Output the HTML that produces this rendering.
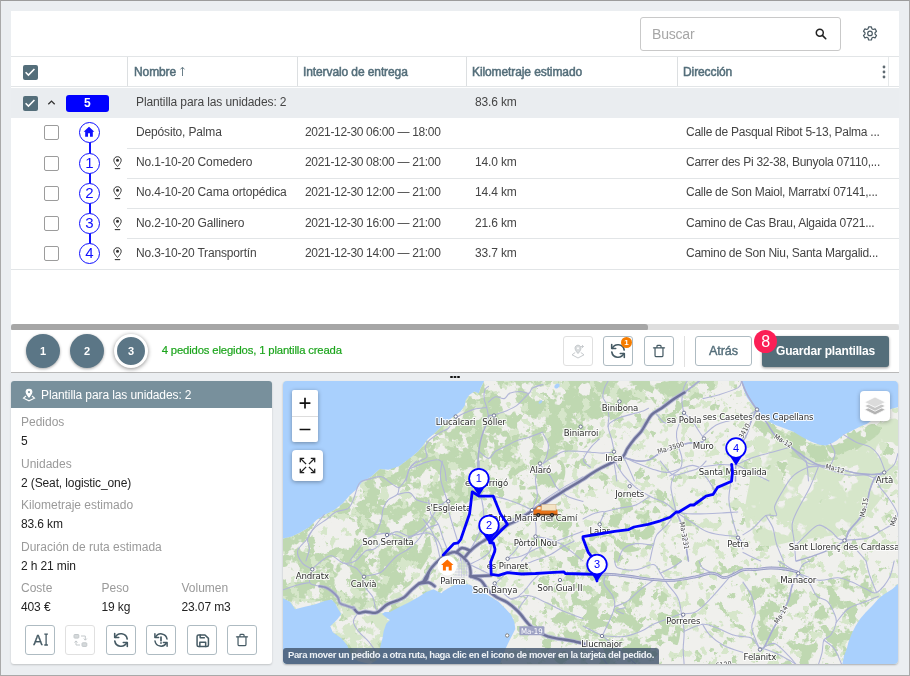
<!DOCTYPE html>
<html lang="es">
<head>
<meta charset="utf-8">
<title>Plantillas</title>
<style>
*{box-sizing:border-box;margin:0;padding:0}
html,body{width:910px;height:676px;overflow:hidden}
body{font-family:"Liberation Sans",sans-serif;font-size:12px;color:#3c3c3c;background:#ebeef1;position:relative}
#wrap{position:absolute;left:0;top:0;width:910px;height:676px;will-change:transform}
.frame{position:absolute;left:0;top:0;width:910px;height:676px;border:1px solid #a9a9a9;border-top-color:#9c9c9c;pointer-events:none;z-index:50}
.abs{position:absolute}
.panel{position:absolute;left:11px;top:11px;width:888px;height:313px;background:#fff}
.search{position:absolute;left:640px;top:17px;width:201px;height:34px;border:1px solid #c9c9c9;border-radius:3px;background:#fff}
.search span{position:absolute;left:11px;top:8px;font-size:14px;color:#a6a6a6;letter-spacing:-0.2px}
.hline{position:absolute;height:1px;background:#e2e5e7}
.vline{position:absolute;width:1px;background:#dcdfe1}
.th{position:absolute;top:64.5px;font-weight:normal;font-size:12px;color:#546e7a;-webkit-text-stroke:0.5px #546e7a;letter-spacing:-0.1px;white-space:nowrap}
.grow{position:absolute;left:11px;top:87.5px;width:888px;height:30.2px;background:#eaedf0}
.td{position:absolute;white-space:nowrap;font-size:12px;letter-spacing:-0.16px;color:#454545}
.cb{position:absolute;width:15px;height:15px;border:1.7px solid #9c9c9c;border-radius:2px;background:#fff}
.cbx{position:absolute;width:15px;height:15px;border-radius:2px;background:#546e7a}
.seq{position:absolute;left:79px;width:21px;height:21px;border:1.6px solid #1010ff;border-radius:50%;background:#fff;color:#1010ff;font-size:15px;text-align:center;line-height:18px}
.btn{position:absolute;width:30px;height:30px;border:1px solid #aebbc2;border-radius:3px;background:#fff}
.btn.dis{border-color:#e0e0e0}
.lab{position:absolute;left:21px;font-size:12px;color:#9a9a9a;letter-spacing:0;white-space:nowrap}
.val{position:absolute;left:21px;font-size:12px;color:#222;letter-spacing:-0.12px;margin-top:0.5px;white-space:nowrap}
</style>
</head>
<body>
<div id="wrap">
<div class="panel"></div>

<!-- search -->
<div class="search"><span>Buscar</span>
<svg class="abs" style="left:173px;top:9px" width="14" height="14" viewBox="0 0 16 16"><circle cx="6.600" cy="6.600" r="4" fill="none" stroke="#222" stroke-width="1.700"/><path d="M9.600 9.600L13.400 13.400" stroke="#222" stroke-width="1.900" stroke-linecap="round"/></svg>
</div>
<svg class="abs" style="left:861px;top:25px" width="18" height="18" viewBox="0 0 18 18" fill="none" stroke="#4a5a63" stroke-width="1.2"><path d="M7.6 1.8h2.8l.5 2 1.2.7 2-.6 1.4 2.4-1.5 1.4v1.4l1.5 1.4-1.4 2.4-2-.6-1.2.7-.5 2H7.6l-.5-2-1.2-.7-2 .6-1.4-2.4L4 9.1V7.7L2.500 6.300l1.400-2.400 2 .6 1.200-.7z" stroke-linejoin="round"/><circle cx="9" cy="8.400" r="2.300"/></svg>

<!-- header -->
<div class="hline" style="left:11px;top:56px;width:888px"></div>
<div class="hline" style="left:11px;top:86px;width:888px"></div>
<div class="vline" style="left:127px;top:57px;height:29px"></div>
<div class="vline" style="left:297px;top:57px;height:29px"></div>
<div class="vline" style="left:466px;top:57px;height:29px"></div>
<div class="vline" style="left:677px;top:57px;height:29px"></div>
<div class="vline" style="left:888px;top:57px;height:29px;background:#e6e9ea"></div>
<div class="cbx" style="left:22.5px;top:64.5px"><svg class="abs" style="left:0;top:0" width="15" height="15" viewBox="0.5 0.5 16 16"><path d="M3.3 8.200l3 3L12.700 4.800" fill="none" stroke="#fff" stroke-width="1.7"/></svg></div>
<div class="th" style="left:134px">Nombre<svg class="abs" style="left:45px;top:1px" width="7" height="11" viewBox="0 0 7 11" fill="none" stroke="#6b7f89" stroke-width="1"><path d="M3.500 10V1.200M1.500 3.400l2-2.200 2 2.200"/></svg></div>
<div class="th" style="left:303px">Intervalo de entrega</div>
<div class="th" style="left:472px">Kilometraje estimado</div>
<div class="th" style="left:683px">Dirección</div>
<svg class="abs" style="left:881px;top:64px" width="6" height="16" viewBox="0 0 6 16" fill="#5f6b72"><circle cx="3" cy="3" r="1.4"/><circle cx="3" cy="8" r="1.4"/><circle cx="3" cy="13" r="1.4"/></svg>

<!-- group row -->
<div class="grow"></div>
<div class="cbx" style="left:22.5px;top:95.5px"><svg class="abs" style="left:0;top:0" width="15" height="15" viewBox="0.5 0.5 16 16"><path d="M3.3 8.200l3 3L12.700 4.800" fill="none" stroke="#fff" stroke-width="1.7"/></svg></div>
<svg class="abs" style="left:47px;top:99px" width="9" height="7" viewBox="0 0 9 7"><path d="M1.300 5.300L4.500 2.100l3.200 3.200" fill="none" stroke="#333" stroke-width="1.3"/></svg>
<div class="abs" style="left:66px;top:95px;width:42.5px;height:16.5px;border-radius:3px;background:#0000ff;color:#fff;font-weight:bold;font-size:12px;text-align:center;line-height:16.5px">5</div>
<div class="td" style="left:136px;top:94.9px;letter-spacing:-0.1px">Plantilla para las unidades: 2</div>
<div class="td" style="left:475px;top:94.9px">83.6 km</div>

<!-- rows -->
<div class="abs" style="left:88.5px;top:133px;width:2px;height:121px;background:#1010ff"></div>
<div class="hline" style="left:127px;top:148px;width:772px"></div>
<div class="cb" style="left:44px;top:125.4px"></div>
<div class="seq" style="top:122.4px"><svg class="abs" style="left:2.9px;top:2.6px" width="12" height="12" viewBox="0 0 11 11"><path d="M5.500 0.800L0.600 5.300h1.400v4.500h2.600V6.700h1.800v3.100h2.600V5.300h1.400z" fill="#1010ff"/></svg></div>
<div class="td" style="left:136px;top:125px">Depósito, Palma</div>
<div class="td" style="left:305px;top:125px;letter-spacing:-0.33px">2021-12-30 06:00 — 18:00</div>
<div class="td" style="left:686px;top:125px;letter-spacing:-0.26px">Calle de Pasqual Ribot 5-13, Palma ...</div>
<div class="hline" style="left:127px;top:178px;width:772px"></div>
<div class="cb" style="left:44px;top:155.6px"></div>
<div class="seq" style="top:152.6px">1</div>
<svg class="abs" style="left:113px;top:156.1px" width="9" height="14" viewBox="0 0 9 14"><path d="M4.500 0.700C2.400 0.700 0.800 2.300 0.800 4.300c0 2.500 3.700 6.200 3.700 6.200s3.700-3.700 3.700-6.200C8.200 2.300 6.600 0.700 4.500 0.700z" fill="#fff" stroke="#333" stroke-width="1"/><circle cx="4.500" cy="4.300" r="1.500" fill="#333"/><path d="M1.800 12.600h5.400" stroke="#333" stroke-width="1.100"/></svg>
<div class="td" style="left:136px;top:155px">No.1-10-20 Comedero</div>
<div class="td" style="left:305px;top:155px;letter-spacing:-0.33px">2021-12-30 08:00 — 21:00</div>
<div class="td" style="left:475px;top:155px">14.0 km</div>
<div class="td" style="left:686px;top:155px;letter-spacing:-0.26px">Carrer des Pi 32-38, Bunyola 07110,...</div>
<div class="hline" style="left:127px;top:208px;width:772px"></div>
<div class="cb" style="left:44px;top:185.8px"></div>
<div class="seq" style="top:182.8px">2</div>
<svg class="abs" style="left:113px;top:186.3px" width="9" height="14" viewBox="0 0 9 14"><path d="M4.500 0.700C2.400 0.700 0.800 2.300 0.800 4.300c0 2.500 3.700 6.200 3.700 6.200s3.700-3.700 3.700-6.200C8.200 2.300 6.600 0.700 4.500 0.700z" fill="#fff" stroke="#333" stroke-width="1"/><circle cx="4.500" cy="4.300" r="1.500" fill="#333"/><path d="M1.800 12.600h5.400" stroke="#333" stroke-width="1.100"/></svg>
<div class="td" style="left:136px;top:185.4px">No.4-10-20 Cama ortopédica</div>
<div class="td" style="left:305px;top:185.4px;letter-spacing:-0.33px">2021-12-30 12:00 — 21:00</div>
<div class="td" style="left:475px;top:185.4px">14.4 km</div>
<div class="td" style="left:686px;top:185.4px;letter-spacing:-0.26px">Calle de Son Maiol, Marratxí 07141,...</div>
<div class="hline" style="left:127px;top:238px;width:772px"></div>
<div class="cb" style="left:44px;top:216.0px"></div>
<div class="seq" style="top:213.0px">3</div>
<svg class="abs" style="left:113px;top:216.5px" width="9" height="14" viewBox="0 0 9 14"><path d="M4.500 0.700C2.400 0.700 0.800 2.300 0.800 4.300c0 2.500 3.700 6.200 3.700 6.200s3.700-3.700 3.700-6.200C8.200 2.300 6.600 0.700 4.500 0.700z" fill="#fff" stroke="#333" stroke-width="1"/><circle cx="4.500" cy="4.300" r="1.500" fill="#333"/><path d="M1.800 12.600h5.400" stroke="#333" stroke-width="1.100"/></svg>
<div class="td" style="left:136px;top:215.6px">No.2-10-20 Gallinero</div>
<div class="td" style="left:305px;top:215.6px;letter-spacing:-0.33px">2021-12-30 16:00 — 21:00</div>
<div class="td" style="left:475px;top:215.6px">21.6 km</div>
<div class="td" style="left:686px;top:215.6px;letter-spacing:-0.26px">Camino de Cas Brau, Algaida 0721...</div>
<div class="hline" style="left:11px;top:269px;width:888px"></div>
<div class="cb" style="left:44px;top:246.2px"></div>
<div class="seq" style="top:243.2px">4</div>
<svg class="abs" style="left:113px;top:246.7px" width="9" height="14" viewBox="0 0 9 14"><path d="M4.500 0.700C2.400 0.700 0.800 2.300 0.800 4.300c0 2.500 3.700 6.200 3.700 6.200s3.700-3.700 3.700-6.200C8.200 2.300 6.600 0.700 4.500 0.700z" fill="#fff" stroke="#333" stroke-width="1"/><circle cx="4.500" cy="4.300" r="1.500" fill="#333"/><path d="M1.800 12.600h5.400" stroke="#333" stroke-width="1.100"/></svg>
<div class="td" style="left:136px;top:245.8px">No.3-10-20 Transportín</div>
<div class="td" style="left:305px;top:245.8px;letter-spacing:-0.33px">2021-12-30 14:00 — 21:00</div>
<div class="td" style="left:475px;top:245.8px">33.7 km</div>
<div class="td" style="left:686px;top:245.8px;letter-spacing:-0.26px">Camino de Son Niu, Santa Margalid...</div>


<div class="frame"></div>
<!-- scrollbar -->
<div class="abs" style="left:11px;top:324px;width:888px;height:6.5px;background:#dedede;border-radius:3px"></div>
<div class="abs" style="left:11px;top:324px;width:637px;height:6.5px;background:#a6a6a6;border-radius:3px"></div>

<!-- toolbar -->
<div class="abs" style="left:11px;top:330px;width:888px;height:42.5px;background:#fff;border-bottom:1.5px solid #b9b9b9"></div>
<div class="abs stp" style="left:26px;top:334px;width:34px;height:34px;border-radius:50%;background:#5b7686;box-shadow:0 1px 3px rgba(0,0,0,.35);color:#fff;font-weight:bold;font-size:11px;text-align:center;line-height:34px">1</div>
<div class="abs stp" style="left:70px;top:334px;width:34px;height:34px;border-radius:50%;background:#5b7686;box-shadow:0 1px 3px rgba(0,0,0,.35);color:#fff;font-weight:bold;font-size:11px;text-align:center;line-height:34px">2</div>
<div class="abs stp" style="left:114px;top:334px;width:34px;height:34px;border-radius:50%;background:#5b7686;border:3px solid #fff;box-shadow:0 1px 4px rgba(0,0,0,.45);color:#fff;font-weight:bold;font-size:11px;text-align:center;line-height:28px">3</div>
<div class="abs" style="left:161.7px;top:344px;font-size:11.3px;color:#1da51d;-webkit-text-stroke:0.2px #1da51d;letter-spacing:-0.15px;white-space:nowrap">4 pedidos elegidos, 1 plantilla creada</div>

<div class="btn dis" style="left:563px;top:336px"><svg class="abs" style="left:6px;top:6px" width="17" height="17" viewBox="0 0 17 17" fill="none" stroke="#c6cacd" stroke-width="1"><path d="M8 2.200c-1.700 0-3 1.300-3 3 0 2.100 3 5.300 3 5.300s3-3.200 3-5.300c0-1.700-1.300-3-3-3z" fill="#d9dcde"/><circle cx="8" cy="5.200" r="1" fill="#fff" stroke="none"/><path d="M5.200 9.500L2 11.800l6 3.200 6-3.200-3.200-2.300"/><path d="M12.500 2v3M11 3.500h3" stroke-width=".9"/></svg></div>
<div class="btn" style="left:603px;top:336px"><svg class="abs" style="left:6px;top:6px" width="16" height="16" viewBox="0 0 16 16" fill="none" stroke="#455a64" stroke-width="1.600" stroke-linecap="round" stroke-linejoin="round"><path d="M1.700 1.500V5.500H5.700"/><path d="M14.300 14.500V10.500H10.300"/><path d="M2.300 5.300A6.300 6.300 0 0 1 14.200 7"/><path d="M13.700 10.700A6.300 6.300 0 0 1 1.800 9"/></svg></div>
<div class="btn" style="left:644px;top:336px"><svg class="abs" style="left:7.0px;top:7.0px" width="14" height="14" viewBox="0 0 24 24" fill="none" stroke="#455a64" stroke-width="2.1" stroke-linecap="round" stroke-linejoin="round"><path d="M2.500 6.500h19"/><path d="M18.800 6.500v13a2.300 2.300 0 0 1-2.300 2.300h-9a2.300 2.300 0 0 1-2.300-2.300v-13"/><path d="M8.500 6V3.800a1.500 1.500 0 0 1 1.500-1.500h4a1.500 1.500 0 0 1 1.500 1.500V6"/></svg></div>
<div class="vline" style="left:684px;top:336px;height:31px;background:#e0e0e0"></div>
<div class="btn" style="left:695px;top:336px;width:57px;color:#546e7a;-webkit-text-stroke:0.4px #546e7a;font-size:12.6px;text-align:center;line-height:28px;letter-spacing:-0.1px">Atrás</div>
<div class="abs" style="left:762px;top:336px;width:127px;height:31px;border-radius:3px;background:#546e7a;box-shadow:0 1px 3px rgba(0,0,0,.4);color:#fff;font-weight:bold;font-size:12px;text-align:center;line-height:30px;letter-spacing:-0.17px;padding-left:0px">Guardar plantillas</div>
<div class="abs" style="left:754.2px;top:329.9px;width:23px;height:23px;border-radius:50%;background:#fb1f56;color:#fff;font-size:16px;text-align:center;line-height:23px">8</div>
<div class="abs" style="left:621px;top:336.500px;width:11px;height:11px;border-radius:50%;background:#f57c00;color:#fff;font-size:8px;font-weight:bold;text-align:center;line-height:11px">1</div>

<!-- splitter dots -->
<div class="abs" style="left:450.2px;top:375.6px;width:2.7px;height:2.7px;background:#111;border-radius:50%;box-shadow:3.5px 0 0 #111,7px 0 0 #111"></div>

<!-- card -->
<div class="abs" style="left:11px;top:381px;width:261px;height:283px;background:#fff;border-radius:3px;box-shadow:0 1px 2px rgba(0,0,0,.18)"></div>
<div class="abs" style="left:11px;top:381px;width:261px;height:27px;background:#78909c;border-radius:3px 3px 0 0"></div>
<svg class="abs" style="left:22px;top:388px" width="14" height="14" viewBox="0 0 14 14" fill="none" stroke="#fff" stroke-width="1.100"><path d="M7 1.200c-1.700 0-2.900 1.300-2.900 2.900 0 2 2.900 4.900 2.900 4.900s2.900-2.900 2.900-4.900c0-1.600-1.200-2.900-2.900-2.900z" fill="#fff"/><circle cx="7" cy="4.100" r="1.100" fill="#78909c" stroke="none"/><path d="M4 8L1.500 10.200 7 12.800l5.500-2.600L10 8"/></svg>
<div class="abs" style="left:41px;top:387.500px;font-size:12px;color:#fff;letter-spacing:-0.1px;white-space:nowrap">Plantilla para las unidades: 2</div>
<div class="lab" style="top:415px">Pedidos</div>
<div class="val" style="top:433.500px">5</div>
<div class="lab" style="top:456.500px">Unidades</div>
<div class="val" style="top:475px">2 (Seat, logistic_one)</div>
<div class="lab" style="top:497.500px">Kilometraje estimado</div>
<div class="val" style="top:516px">83.6 km</div>
<div class="lab" style="top:539.500px">Duración de ruta estimada</div>
<div class="val" style="top:558.500px">2 h 21 min</div>
<div class="lab" style="top:581px">Coste</div>
<div class="val" style="top:599.500px">403 €</div>
<div class="lab" style="top:581px;left:101.500px">Peso</div>
<div class="val" style="top:599.500px;left:101.500px">19 kg</div>
<div class="lab" style="top:581px;left:181.500px">Volumen</div>
<div class="val" style="top:599.500px;left:181.500px">23.07 m3</div>
<div class="btn" style="left:25px;top:625.3px"><svg class="abs" style="left:6px;top:6px" width="18" height="16" viewBox="0 0 18 16"><text x="1.300" y="12.900" font-family="'Liberation Sans',sans-serif" font-size="14" fill="#455a64" stroke="#455a64" stroke-width=".3">A</text><path d="M12.300 2.200h3.600M12.300 13h3.600M14.100 2.200V13" stroke="#455a64" stroke-width="1.300" fill="none"/></svg></div>
<div class="btn dis" style="left:65px;top:625.3px"><svg class="abs" style="left:7px;top:7px" width="15" height="15" viewBox="0 0 15 15" fill="none" stroke="#c3c8cb" stroke-width="1"><rect x="1" y="1.500" width="4.800" height="3.600" rx=".8" fill="#d5d9db"/><rect x="9" y="9.800" width="4.800" height="3.600" rx=".8" fill="#d5d9db"/><path d="M8 3h4.300v4M10.800 5.600l1.500 1.600 1.500-1.600M7 12H3V8M1.500 9.500L3 7.900l1.500 1.600"/></svg></div>
<div class="btn" style="left:106px;top:625.3px"><svg class="abs" style="left:6px;top:6px" width="16" height="16" viewBox="0 0 16 16" fill="none" stroke="#455a64" stroke-width="1.600" stroke-linecap="round" stroke-linejoin="round"><path d="M1.700 1.500V5.500H5.700"/><path d="M14.300 14.500V10.500H10.300"/><path d="M2.300 5.300A6.300 6.300 0 0 1 14.200 7"/><path d="M13.700 10.700A6.300 6.300 0 0 1 1.800 9"/></svg></div>
<div class="btn" style="left:146px;top:625.3px"><svg class="abs" style="left:6px;top:6px" width="16" height="16" viewBox="0 0 16 16" fill="none" stroke="#455a64" stroke-width="1.500" stroke-linecap="round" stroke-linejoin="round"><path d="M1.900 1.800V5.500H5.600"/><path d="M14.100 14.200V10.500H10.400"/><path d="M2.500 5.300A6.100 6.100 0 0 1 14 7"/><path d="M13.500 10.700A6.100 6.100 0 0 1 2 9"/><path d="M8 5v3.700M8 10.900v.2" stroke-width="1.700"/></svg></div>
<div class="btn" style="left:187px;top:625.3px"><svg class="abs" style="left:6.500px;top:6.500px" width="15.500" height="15.500" viewBox="0 0 24 24" fill="none" stroke="#455a64" stroke-width="2.300" stroke-linecap="round" stroke-linejoin="round"><path d="M18.500 21h-13a2.300 2.300 0 0 1-2.300-2.300V5.300A2.300 2.300 0 0 1 5.500 3H15.500l5.300 5.300v10.400a2.300 2.300 0 0 1-2.300 2.300z"/><path d="M16.500 21v-6.500h-9V21"/><path d="M8 3.200v4.300h6.500"/></svg></div>
<div class="btn" style="left:227px;top:625.3px"><svg class="abs" style="left:7.0px;top:7.0px" width="14" height="14" viewBox="0 0 24 24" fill="none" stroke="#455a64" stroke-width="2.1" stroke-linecap="round" stroke-linejoin="round"><path d="M2.500 6.500h19"/><path d="M18.800 6.500v13a2.300 2.300 0 0 1-2.300 2.300h-9a2.300 2.300 0 0 1-2.300-2.300v-13"/><path d="M8.500 6V3.800a1.500 1.500 0 0 1 1.500-1.500h4a1.500 1.500 0 0 1 1.500 1.500V6"/></svg></div>

<!-- map -->
<div id="map" class="abs" style="left:283px;top:381px;width:615px;height:283px;border-radius:4px;overflow:hidden;background:#f1f1ef;box-shadow:0 1px 2px rgba(0,0,0,.28)">
<svg class="abs" style="left:0;top:0" width="615" height="283" viewBox="283 381 615 283" font-family="'DejaVu Sans Condensed','DejaVu Sans',sans-serif" font-size="9.2">
<defs><filter id="rgh" x="-5%" y="-5%" width="110%" height="110%"><feTurbulence type="fractalNoise" baseFrequency="0.09" numOctaves="3" seed="4"/><feDisplacementMap in="SourceGraphic" scale="9" xChannelSelector="R" yChannelSelector="G"/></filter><filter id="rgh2" x="-5%" y="-5%" width="110%" height="110%"><feTurbulence type="fractalNoise" baseFrequency="0.16" numOctaves="2" seed="11"/><feDisplacementMap in="SourceGraphic" scale="6" xChannelSelector="R" yChannelSelector="G"/></filter></defs>
<rect x="283" y="381" width="615" height="283" fill="#f0f0ed"/>
<defs><filter id="fA" x="0" y="0" width="100%" height="100%" color-interpolation-filters="sRGB"><feTurbulence type="fractalNoise" baseFrequency="0.06" numOctaves="4" seed="3" result="n"/><feColorMatrix in="n" type="matrix" values="0 0 0 0 0.749 0 0 0 0 0.847 0 0 0 0 0.694 18 0 0 0 -7.65" result="t"/><feComposite in="t" in2="SourceGraphic" operator="in"/></filter><filter id="fB" x="0" y="0" width="100%" height="100%" color-interpolation-filters="sRGB"><feTurbulence type="fractalNoise" baseFrequency="0.07" numOctaves="4" seed="8" result="n"/><feColorMatrix in="n" type="matrix" values="0 0 0 0 0.839 0 0 0 0 0.902 0 0 0 0 0.792 18 0 0 0 -8.46" result="t"/><feComposite in="t" in2="SourceGraphic" operator="in"/></filter><filter id="fC" x="0" y="0" width="100%" height="100%" color-interpolation-filters="sRGB"><feTurbulence type="fractalNoise" baseFrequency="0.085" numOctaves="4" seed="21" result="n"/><feColorMatrix in="n" type="matrix" values="0 0 0 0 0.749 0 0 0 0 0.847 0 0 0 0 0.694 20 0 0 0 -12.64" result="t"/><feComposite in="t" in2="SourceGraphic" operator="in"/></filter><filter id="fD" x="0" y="0" width="100%" height="100%" color-interpolation-filters="sRGB"><feTurbulence type="fractalNoise" baseFrequency="0.1" numOctaves="4" seed="33" result="n"/><feColorMatrix in="n" type="matrix" values="0 0 0 0 0.839 0 0 0 0 0.902 0 0 0 0 0.792 20 0 0 0 -11.90" result="t"/><feComposite in="t" in2="SourceGraphic" operator="in"/></filter><filter id="fE" x="0" y="0" width="100%" height="100%" color-interpolation-filters="sRGB"><feTurbulence type="fractalNoise" baseFrequency="0.07" numOctaves="4" seed="5" result="n"/><feColorMatrix in="n" type="matrix" values="0 0 0 0 0.749 0 0 0 0 0.847 0 0 0 0 0.694 18 0 0 0 -9.54" result="t"/><feComposite in="t" in2="SourceGraphic" operator="in"/></filter><filter id="fF" x="0" y="0" width="100%" height="100%" color-interpolation-filters="sRGB"><feTurbulence type="fractalNoise" baseFrequency="0.05" numOctaves="3" seed="15" result="n"/><feColorMatrix in="n" type="matrix" values="0 0 0 0 0.839 0 0 0 0 0.902 0 0 0 0 0.792 18 0 0 0 -7.20" result="t"/><feComposite in="t" in2="SourceGraphic" operator="in"/></filter></defs>
<path d="M484.1 381.0 L480.6 388.0 L478.8 393.3 L474.4 391.5 L469.2 395.0 L465.6 400.3 L464.8 405.6 L460.4 411.8 L455.0 415.3 L450.7 418.8 L444.5 423.2 L439.3 428.5 L434.0 433.7 L427.8 439.0 L422.6 446.0 L418.2 451.3 L412.0 456.6 L406.0 461.0 L399.0 466.3 L388.5 469.8 L379.7 468.9 L371.0 476.8 L362.0 482.0 L356.8 489.0 L349.8 495.3 L342.8 503.2 L334.0 510.2 L325.2 514.6 L316.4 520.0 L309.4 527.0 L300.6 532.2 L291.8 536.6 L283.0 538.4 L283.0 600.0 L300.0 604.0 L320.0 601.0 L340.0 607.0 L355.0 612.0 L372.0 606.0 L392.0 598.0 L410.0 585.0 L422.0 568.0 L432.0 552.0 L430.0 537.0 L436.0 522.0 L446.0 508.0 L470.0 502.0 L492.0 496.0 L505.0 484.0 L520.0 472.0 L538.0 464.0 L560.0 456.0 L585.0 448.0 L600.0 438.0 L612.0 425.0 L625.0 410.0 L645.0 400.0 L668.0 398.0 L690.0 392.0 L700.0 381.0 Z" fill="#000" filter="url(#fA)"/>
<g filter="url(#rgh)">
<path d="M316.4 521.7 C319.6 521.0 329.6 518.0 335.7 517.6 C341.9 517.2 349.7 517.1 353.3 519.4 C357.0 521.7 357.7 527.3 357.7 531.3 C357.7 535.4 357.0 540.7 353.3 543.6 C349.7 546.6 342.2 547.3 335.7 548.9 C329.3 550.5 320.4 553.2 314.6 553.3 C308.9 553.5 302.6 552.9 301.5 549.8 C300.3 546.7 306.6 537.3 307.6 534.8 Z" fill="#f0f0ed"/>
<path d="M381.5 487.4 C383.8 486.8 392.6 482.4 395.5 483.9 C398.5 485.3 400.2 492.4 399.0 496.2 C397.9 500.0 392.0 505.8 388.5 506.7 C385.0 507.6 379.7 502.3 377.9 501.4 Z" fill="#f0f0ed"/>
</g>
<path d="M283.0 596.0 L340.0 603.0 L372.0 602.0 L392.0 594.0 L412.0 590.0 L425.0 575.0 L432.0 590.0 L420.0 600.0 L400.0 606.0 L388.0 612.0 L384.0 640.0 L380.0 664.0 L340.0 664.0 L330.0 640.0 L320.0 615.0 L283.0 615.0 Z" fill="#000" filter="url(#fB)"/>
<rect x="283" y="381" width="615" height="283" fill="#000" filter="url(#fC)"/>
<rect x="283" y="381" width="615" height="283" fill="#000" filter="url(#fD)"/>
<path d="M745.0 455.0 C752.5 452.5 775.8 441.5 790.0 440.0 C804.2 438.5 817.5 447.3 830.0 446.0 C842.5 444.7 853.7 436.3 865.0 432.0 C876.3 427.7 892.5 413.7 898.0 420.0 C903.5 426.3 901.0 456.7 898.0 470.0 C895.0 483.3 888.0 490.0 880.0 500.0 C872.0 510.0 863.3 523.3 850.0 530.0 C836.7 536.7 815.0 537.5 800.0 540.0 C785.0 542.5 769.2 548.3 760.0 545.0 C750.8 541.7 746.7 530.8 745.0 520.0 C743.3 509.2 749.2 486.7 750.0 480.0 Z" fill="#000" filter="url(#fF)"/>
<path d="M545.0 585.0 C554.2 584.2 580.8 579.2 600.0 580.0 C619.2 580.8 646.7 583.3 660.0 590.0 C673.3 596.7 678.3 609.2 680.0 620.0 C681.7 630.8 680.0 647.7 670.0 655.0 C660.0 662.3 638.3 662.5 620.0 664.0 C601.7 665.5 572.5 669.7 560.0 664.0 C547.5 658.3 547.5 635.7 545.0 630.0 Z" fill="#000" filter="url(#fE)"/>
<path d="M800.0 600.0 C808.3 595.8 835.8 577.5 850.0 575.0 C864.2 572.5 883.3 578.3 885.0 585.0 C886.7 591.7 866.7 601.8 860.0 615.0 C853.3 628.2 855.0 655.8 845.0 664.0 C835.0 672.2 809.2 669.7 800.0 664.0 C790.8 658.3 791.7 635.7 790.0 630.0 Z" fill="#000" filter="url(#fE)"/>
<path d="M610.0 495.0 C618.3 494.2 650.8 485.0 660.0 490.0 C669.2 495.0 668.3 515.0 665.0 525.0 C661.7 535.0 650.8 545.5 640.0 550.0 C629.2 554.5 606.7 551.7 600.0 552.0 Z" fill="#000" filter="url(#fE)"/>
<path d="M535.0 535.0 C543.3 535.8 575.8 531.7 585.0 540.0 C594.2 548.3 595.8 577.5 590.0 585.0 C584.2 592.5 556.7 585.0 550.0 585.0 Z" fill="#000" filter="url(#fE)"/>
<path d="M640.0 385.0 C652.5 384.3 701.7 378.5 715.0 381.0 C728.3 383.5 729.2 395.2 720.0 400.0 C710.8 404.8 670.0 408.3 660.0 410.0 Z" fill="#000" filter="url(#fE)"/>
<path d="M515.0 465.0 C522.5 464.2 552.5 456.7 560.0 460.0 C567.5 463.3 566.7 480.0 560.0 485.0 C553.3 490.0 526.7 489.2 520.0 490.0 Z" fill="#000" filter="url(#fE)"/>
<path d="M757.0 418.0 C760.0 419.7 767.8 424.3 775.0 428.0 C782.2 431.7 791.5 436.5 800.0 440.0 C808.5 443.5 819.0 448.8 826.0 449.0 C833.0 449.2 836.7 443.8 842.0 441.0 C847.3 438.2 853.0 434.8 858.0 432.0 C863.0 429.2 868.3 424.0 872.0 424.0 C875.7 424.0 881.7 428.3 880.0 432.0 C878.3 435.7 868.3 441.7 862.0 446.0 C855.7 450.3 849.8 455.3 842.0 458.0 C834.2 460.7 823.7 462.3 815.0 462.0 C806.3 461.7 797.8 459.3 790.0 456.0 C782.2 452.7 774.3 446.7 768.0 442.0 C761.7 437.3 754.7 430.3 752.0 428.0 Z" fill="#000" filter="url(#fA)"/>
<path d="M544.0 518.0 C548.5 517.7 566.0 513.3 571.0 516.0 C576.0 518.7 577.8 530.7 574.0 534.0 C570.2 537.3 552.3 535.7 548.0 536.0 Z" fill="#000" filter="url(#fE)"/>
<path d="M556.0 540.0 C560.3 540.0 574.7 537.3 582.0 540.0 C589.3 542.7 596.7 548.7 600.0 556.0 C603.3 563.3 606.2 579.0 602.0 584.0 C597.8 589.0 582.3 589.0 575.0 586.0 C567.7 583.0 560.8 569.3 558.0 566.0 Z" fill="#000" filter="url(#fE)"/>
<path d="M752.0 586.0 C759.3 586.3 788.0 577.3 796.0 588.0 C804.0 598.7 806.0 638.8 800.0 650.0 C794.0 661.2 768.7 660.0 760.0 655.0 C751.3 650.0 750.0 625.8 748.0 620.0 Z" fill="#000" filter="url(#fE)"/>
<g filter="url(#rgh2)">
<path d="M767.0 423.0 C768.0 423.2 771.5 423.0 773.0 424.0 C774.5 425.0 776.2 427.7 776.0 429.0 C775.8 430.3 773.5 431.8 772.0 432.0 C770.5 432.2 767.8 430.3 767.0 430.0 Z" fill="#bfd8b1"/>
<path d="M791.0 432.0 C792.3 432.2 796.5 432.0 799.0 433.0 C801.5 434.0 805.0 435.8 806.0 438.0 C807.0 440.2 806.5 444.7 805.0 446.0 C803.5 447.3 799.2 447.0 797.0 446.0 C794.8 445.0 792.8 441.0 792.0 440.0 Z" fill="#bfd8b1"/>
<path d="M808.0 443.0 C809.7 443.3 815.0 444.2 818.0 445.0 C821.0 445.8 824.5 446.2 826.0 448.0 C827.5 449.8 828.0 453.8 827.0 456.0 C826.0 458.2 822.7 460.7 820.0 461.0 C817.3 461.3 813.2 459.8 811.0 458.0 C808.8 456.2 807.7 451.3 807.0 450.0 Z" fill="#bfd8b1"/>
<path d="M827.0 447.0 C828.5 446.7 833.3 445.0 836.0 445.0 C838.7 445.0 842.3 445.7 843.0 447.0 C843.7 448.3 842.0 451.8 840.0 453.0 C838.0 454.2 832.5 453.8 831.0 454.0 Z" fill="#bfd8b1"/>
<path d="M846.0 433.0 C847.3 432.7 851.5 430.8 854.0 431.0 C856.5 431.2 860.2 432.3 861.0 434.0 C861.8 435.7 860.8 439.5 859.0 441.0 C857.2 442.5 851.5 442.7 850.0 443.0 Z" fill="#bfd8b1"/>
<path d="M754.0 437.0 C755.5 436.8 760.5 435.2 763.0 436.0 C765.5 436.8 768.3 439.3 769.0 442.0 C769.7 444.7 768.8 450.2 767.0 452.0 C765.2 453.8 760.3 454.0 758.0 453.0 C755.7 452.0 753.8 447.2 753.0 446.0 Z" fill="#d6e6ca"/>
<path d="M776.0 436.0 C778.0 436.7 785.3 437.7 788.0 440.0 C790.7 442.3 792.7 447.5 792.0 450.0 C791.3 452.5 786.8 455.3 784.0 455.0 C781.2 454.7 776.5 449.2 775.0 448.0 Z" fill="#d6e6ca"/>
<path d="M838.0 455.0 C840.3 454.2 847.7 450.5 852.0 450.0 C856.3 449.5 862.7 450.0 864.0 452.0 C865.3 454.0 863.0 459.7 860.0 462.0 C857.0 464.3 849.7 466.0 846.0 466.0 C842.3 466.0 839.3 462.7 838.0 462.0 Z" fill="#d6e6ca"/>
<path d="M866.0 428.0 C867.3 427.3 871.7 424.0 874.0 424.0 C876.3 424.0 879.7 426.0 880.0 428.0 C880.3 430.0 878.0 434.7 876.0 436.0 C874.0 437.3 869.3 436.0 868.0 436.0 Z" fill="#bfd8b1"/>
</g>
<path d="M283.0 381.0 L484.1 381.0 L480.6 388.0 L478.8 393.3 L474.4 391.5 L469.2 395.0 L465.6 400.3 L464.8 405.6 L460.4 411.8 L455.0 415.3 L450.7 418.8 L444.5 423.2 L439.3 428.5 L434.0 433.7 L427.8 439.0 L422.6 446.0 L418.2 451.3 L412.0 456.6 L406.0 461.0 L399.0 466.3 L388.5 469.8 L379.7 468.9 L371.0 476.8 L362.0 482.0 L356.8 489.0 L349.8 495.3 L342.8 503.2 L334.0 510.2 L325.2 514.6 L316.4 520.0 L309.4 527.0 L300.6 532.2 L291.8 536.6 L283.0 538.4 Z" fill="#a9d0fd"/>
<path d="M283.0 664.0 L283.0 598.3 L290.3 601.9 L295.1 609.2 L304.8 606.8 L314.6 604.4 L325.5 600.7 L331.5 599.5 L335.2 603.2 L337.6 608.0 L341.3 614.1 L337.6 618.9 L335.2 621.4 L330.3 626.2 L332.8 632.3 L341.3 638.3 L347.3 645.6 L349.7 651.7 L353.4 657.8 L358.2 661.2 L370.4 664.1 L376.4 660.2 L378.9 652.9 L380.6 645.6 L382.5 638.3 L383.7 631.1 L386.2 623.8 L389.8 620.1 L384.9 616.5 L382.0 614.1 L384.9 612.1 L389.8 612.1 L399.5 607.0 L409.2 602.2 L418.9 596.8 L426.2 592.0 L433.5 589.3 L438.3 591.7 L442.0 593.2 L442.3 592.0 L447.6 588.5 L454.6 585.0 L463.4 583.2 L470.5 585.0 L477.5 589.4 L484.5 592.9 L491.6 597.3 L498.6 601.7 L505.6 608.7 L511.0 614.8 L514.4 621.9 L515.3 628.9 L512.7 634.2 L509.2 641.0 L505.0 650.0 L500.0 664.0 Z" fill="#a9d0fd"/>
<path d="M741.5 381.0 L743.7 389.8 L747.0 397.5 L752.5 405.2 L756.8 409.6 L762.3 416.2 L769.0 421.7 L775.5 425.0 L784.3 428.3 L793.0 431.5 L802.0 437.0 L810.7 441.4 L819.5 444.7 L826.0 445.4 L831.6 443.6 L837.0 440.3 L843.7 434.8 L852.5 430.5 L861.2 426.0 L866.7 423.9 L874.4 418.4 L885.4 411.8 L892.0 408.5 L899.0 407.0 L899.0 381.0 Z" fill="#a9d0fd"/>
<path d="M899.0 583.0 L892.5 589.0 L883.7 594.4 L878.4 598.8 L873.0 605.0 L866.0 612.0 L860.0 619.0 L855.5 626.0 L852.0 633.0 L848.5 641.9 L846.7 648.9 L844.0 656.0 L842.3 664.0 L899.0 664.0 Z" fill="#a9d0fd"/>
<ellipse cx="557" cy="386" rx="3" ry="2" fill="#a9d0fd" transform="rotate(-35 557 386)"/>
<ellipse cx="540.5" cy="402" rx="2.2" ry="1.3" fill="#a9d0fd" transform="rotate(-40 540.5 402)"/>
<g fill="none" stroke="#b2b6d8" stroke-width="1.1" stroke-linejoin="round" stroke-linecap="round">
<path d="M488.5 416.2 C488.2 414.7 487.5 410.3 486.7 407.4 C486.0 404.4 484.4 401.5 484.1 398.6 C483.8 395.7 484.2 391.8 485.0 389.8 C485.7 387.7 487.9 386.9 488.5 386.3"/>
<path d="M486.7 407.4 C484.7 407.7 477.9 408.3 474.4 409.1 C470.9 410.0 468.3 411.5 465.6 412.6 C463.0 413.8 460.7 414.7 458.6 416.2 C456.6 417.6 455.1 419.4 453.3 421.4 C451.6 423.5 450.1 426.7 448.1 428.5 C446.0 430.2 443.1 430.8 441.0 432.0 C439.0 433.2 437.8 434.0 435.7 435.5 C433.7 437.0 430.5 438.7 428.7 440.8 C427.0 442.8 425.5 445.2 425.2 447.8 C424.9 450.5 427.5 454.6 427.0 456.6 C426.4 458.7 423.7 458.9 421.7 460.1 C419.6 461.3 416.7 462.2 414.6 463.6 C412.6 465.1 410.8 466.0 409.4 468.9 C407.9 471.8 406.4 479.0 405.9 481.0"/>
<path d="M478.8 451.3 C480.4 452.5 485.7 458.4 488.5 458.4 C491.3 458.4 492.6 453.4 495.5 451.3 C498.5 449.3 502.6 447.8 506.1 446.1 C509.6 444.3 512.8 442.2 516.6 440.8 C520.4 439.3 524.5 438.7 528.9 437.3 C533.3 435.8 540.7 432.9 543.0 432.0"/>
<path d="M409.4 468.9 C412.3 467.7 422.0 463.3 427.0 461.9 C431.9 460.4 436.3 458.9 439.3 460.1 C442.2 461.3 443.4 465.4 444.5 468.9 C445.7 472.4 446.0 479.0 446.3 481.0"/>
<path d="M488.5 402.1 C489.7 401.2 492.9 397.4 495.5 396.8 C498.2 396.2 502.0 399.2 504.3 398.6 C506.7 398.0 507.0 394.5 509.6 393.3 C512.2 392.1 516.9 391.5 520.1 391.5 C523.4 391.5 526.9 393.9 528.9 393.3 C531.0 392.7 530.1 389.5 532.5 388.0 C534.8 386.6 541.2 385.1 543.0 384.5"/>
<path d="M495.5 414.4 C497.3 413.8 502.6 412.4 506.1 410.9 C509.6 409.4 513.7 407.7 516.6 405.6 C519.6 403.6 521.6 400.6 523.7 398.6 C525.7 396.5 528.1 394.2 528.9 393.3"/>
<path d="M305.9 561.0 C306.4 559.0 309.1 552.7 309.4 548.9 C309.7 545.1 306.7 541.9 307.6 538.4 C308.5 534.8 311.4 531.0 314.6 527.8 C317.9 524.6 323.4 521.7 327.0 519.0 C330.5 516.4 332.2 513.7 335.7 512.0 C339.3 510.2 345.1 510.5 348.1 508.5 C351.0 506.4 351.9 502.9 353.3 499.7 C354.8 496.5 355.7 492.1 356.8 489.1 C358.0 486.2 358.0 483.9 360.4 482.1 C362.7 480.3 367.4 479.5 370.9 478.6 C374.4 477.7 377.9 475.9 381.5 476.8 C385.0 477.7 389.1 482.1 392.0 483.9 C394.9 485.6 396.7 488.3 399.0 487.4 C401.4 486.5 404.3 481.8 406.1 478.6 C407.8 475.4 407.8 471.0 409.6 468.0 C411.4 465.1 415.5 462.2 416.6 461.0"/>
<path d="M399.0 487.4 C398.8 488.5 399.0 492.4 397.3 494.4 C395.5 496.5 390.8 497.3 388.5 499.7 C386.2 502.0 384.4 505.2 383.2 508.5 C382.0 511.7 382.3 515.5 381.5 519.0 C380.6 522.5 379.1 526.9 377.9 529.6 C376.8 532.2 376.5 533.1 374.4 534.8 C372.4 536.6 368.3 537.8 365.6 540.1 C363.0 542.5 361.2 545.4 358.6 548.9 C356.0 552.4 351.3 559.0 349.8 561.0"/>
<path d="M397.3 494.4 C399.3 494.1 406.4 491.8 409.6 492.6 C412.8 493.5 413.4 497.9 416.6 499.7 C419.8 501.4 424.5 502.3 428.9 503.2 C433.3 504.1 440.7 504.7 443.0 505.0"/>
<path d="M374.4 534.8 C376.5 534.6 383.2 533.1 386.7 533.1 C390.3 533.1 392.3 534.0 395.5 534.8 C398.8 535.7 402.6 538.4 406.1 538.4 C409.6 538.4 412.8 535.7 416.6 534.8 C420.4 534.0 425.4 532.2 428.9 533.1 C432.5 534.0 435.4 536.9 437.7 540.1 C440.1 543.3 442.1 550.4 443.0 552.4"/>
<path d="M481.0 496.2 C481.5 499.1 483.7 508.5 483.7 513.7 C483.7 519.0 482.3 523.4 481.0 527.8 C479.7 532.2 477.8 536.0 475.7 540.1 C473.7 544.2 470.8 548.9 468.7 552.4 C466.7 555.9 464.3 559.6 463.4 561.0"/>
<path d="M532.0 510.2 C532.9 507.9 536.7 501.4 537.3 496.2 C537.9 490.9 535.1 483.9 535.5 478.6 C536.0 473.3 539.2 466.9 539.9 464.5"/>
<path d="M532.0 510.2 C532.6 512.3 534.9 518.1 535.5 522.5 C536.1 526.9 536.7 531.6 535.5 536.6 C534.4 541.6 530.8 548.4 528.5 552.4 C526.2 556.5 522.6 559.6 521.5 561.0"/>
<path d="M447.6 501.4 C447.9 503.5 448.2 508.8 449.4 513.7 C450.5 518.7 453.2 526.3 454.6 531.3 C456.1 536.3 457.1 538.7 458.2 543.6 C459.2 548.6 460.4 558.1 460.8 561.0"/>
<path d="M447.6 501.4 C446.4 497.6 441.5 485.3 440.6 478.6 C439.7 471.8 442.0 463.9 442.3 461.0"/>
<path d="M423.0 519.0 C424.5 521.1 429.4 526.9 431.8 531.3 C434.1 535.7 435.6 540.4 437.1 545.4 C438.5 550.3 440.0 558.4 440.6 561.0"/>
<path d="M583.0 476.8 C579.8 478.6 569.8 483.7 563.7 487.4 C557.5 491.0 551.4 495.1 546.1 498.8 C540.8 502.5 536.1 506.6 532.0 509.4 C527.9 512.1 525.6 513.5 521.5 515.5 C517.4 517.6 511.5 519.3 507.4 521.7 C503.3 524.0 500.7 526.8 496.8 529.6 C493.0 532.4 488.3 535.4 484.5 538.4 C480.7 541.3 475.7 545.7 474.0 547.2"/>
<path d="M539.9 464.5 C541.5 466.3 546.8 471.3 549.6 475.1 C552.4 478.9 553.7 483.9 556.6 487.4 C559.6 490.9 562.8 493.8 567.2 496.2 C571.6 498.5 580.4 500.6 583.0 501.4"/>
<path d="M507.4 558.6 C509.7 558.1 516.8 557.6 521.5 555.9 C526.2 554.3 530.8 551.0 535.5 548.9 C540.2 546.9 544.9 545.4 549.6 543.6 C554.3 541.9 558.1 540.4 563.7 538.4 C569.2 536.3 579.8 532.5 583.0 531.3"/>
<path d="M535.5 536.6 C537.3 536.9 542.0 537.2 546.1 538.4 C550.2 539.5 555.7 541.3 560.1 543.6 C564.5 546.0 568.6 549.5 572.5 552.4 C576.3 555.3 581.2 559.6 583.0 561.0"/>
<path d="M493.3 496.2 C495.7 496.8 502.7 498.2 507.4 499.7 C512.1 501.1 517.4 503.2 521.5 505.0 C525.6 506.7 530.3 509.4 532.0 510.2"/>
<path d="M623.9 457.5 C626.2 458.1 633.8 460.6 637.9 461.0 C642.0 461.4 645.3 461.1 648.5 460.1 C651.7 459.1 654.4 456.5 657.3 454.8 C660.2 453.2 662.9 451.9 666.1 450.5 C669.3 449.0 673.1 447.2 676.6 446.1 C680.1 444.9 684.0 444.0 687.2 443.4 C690.4 442.8 693.3 442.8 696.0 442.5 C698.6 442.2 701.8 441.8 703.0 441.7"/>
<path d="M623.9 457.5 C624.8 459.4 627.4 465.0 629.2 468.9 C630.9 472.8 633.5 479.0 634.4 481.0"/>
<path d="M613.3 458.4 C613.6 460.1 614.5 465.1 615.1 468.9 C615.7 472.7 616.6 479.0 616.8 481.0"/>
<path d="M614.2 451.3 C613.8 449.3 612.6 443.1 611.6 439.0 C610.5 434.9 608.5 430.5 608.1 426.7 C607.6 422.9 609.2 420.0 608.9 416.2 C608.6 412.4 607.3 407.1 606.3 403.9 C605.3 400.6 603.1 399.5 602.8 396.8 C602.5 394.2 603.7 390.7 604.5 388.0 C605.4 385.4 607.5 382.2 608.1 381.0"/>
<path d="M613.3 452.2 C611.6 452.4 606.6 453.1 602.8 453.1 C599.0 453.1 594.6 452.5 590.5 452.2 C586.4 451.9 582.6 451.5 578.2 451.3 C573.8 451.2 568.2 450.5 564.1 451.3 C560.0 452.2 557.1 454.6 553.5 456.6 C550.0 458.7 544.8 462.5 543.0 463.6"/>
<path d="M683.7 412.6 C683.4 410.6 681.9 404.4 681.9 400.3 C681.9 396.2 682.8 391.3 683.7 388.0 C684.5 384.8 686.6 382.2 687.2 381.0"/>
<path d="M683.7 412.6 C685.1 414.1 689.8 418.2 692.5 421.4 C695.1 424.7 697.7 429.4 699.5 432.0 C701.2 434.6 702.4 436.4 703.0 437.3"/>
<path d="M683.7 412.6 C682.5 415.9 677.5 426.4 676.6 432.0 C675.7 437.6 677.5 441.7 678.4 446.1 C679.3 450.5 681.6 454.6 681.9 458.4 C682.2 462.2 682.2 466.0 680.1 468.9 C678.1 471.8 671.4 474.8 669.6 475.9"/>
<path d="M648.5 408.3 C647.6 408.7 646.2 409.9 643.2 410.9 C640.3 411.9 635.0 413.2 630.9 414.4 C626.8 415.6 622.1 416.5 618.6 417.9 C615.1 419.4 611.6 421.7 609.8 423.2 C608.1 424.7 608.3 426.1 608.1 426.7"/>
<path d="M599.3 439.0 C597.8 440.5 593.1 444.3 590.5 447.8 C587.8 451.3 583.4 456.9 583.4 460.1 C583.4 463.3 589.3 466.0 590.5 467.2"/>
<path d="M623.9 457.5 C626.2 458.5 633.3 461.7 637.9 463.6 C642.6 465.5 647.3 467.4 652.0 468.9 C656.7 470.4 661.4 472.4 666.1 472.4 C670.8 472.4 675.7 470.1 680.1 468.9 C684.5 467.7 688.6 465.4 692.5 465.4 C696.3 465.4 701.2 468.3 703.0 468.9"/>
<path d="M543.0 433.7 C543.9 435.5 547.7 440.5 548.3 444.3 C548.9 448.1 547.4 453.4 546.5 456.6 C545.6 459.8 543.6 462.5 543.0 463.6"/>
<path d="M684.5 392.4 C685.9 391.4 690.0 388.2 692.5 386.3 C694.9 384.4 698.3 381.9 699.5 381.0"/>
<path d="M655.5 412.6 C656.7 414.1 660.8 419.7 662.6 421.4 C664.3 423.2 665.5 422.9 666.1 423.2"/>
<path d="M741.5 381.0 C742.4 383.2 744.4 389.4 747.0 394.2 C749.5 398.9 753.5 404.8 756.8 409.6 C760.1 414.3 763.6 418.4 766.7 422.8 C769.8 427.2 771.5 431.9 775.5 435.9 C779.6 440.0 786.9 444.0 790.9 446.9 C794.9 449.9 797.1 451.0 799.7 453.5 C802.3 456.1 804.8 457.7 806.3 462.3 C807.8 466.9 808.1 477.9 808.5 481.0"/>
<path d="M756.8 409.6 C755.9 411.4 753.0 416.5 751.4 420.6 C749.7 424.6 748.8 429.4 747.0 433.7 C745.1 438.1 742.2 441.8 740.4 446.9 C738.5 452.1 736.7 461.6 736.0 464.5"/>
<path d="M703.0 398.6 C705.9 397.8 714.7 396.0 720.6 394.2 C726.4 392.4 734.7 389.8 738.2 387.6 C741.6 385.4 740.9 382.1 741.5 381.0"/>
<path d="M703.0 435.9 C705.2 434.1 711.8 427.5 716.2 425.0 C720.6 422.4 724.2 422.0 729.4 420.6 C734.5 419.1 742.4 418.0 747.0 416.2 C751.5 414.3 755.2 410.7 756.8 409.6"/>
<path d="M703.0 466.7 C705.9 466.3 715.1 464.9 720.6 464.5 C726.1 464.2 730.8 465.6 736.0 464.5 C741.1 463.4 744.8 460.1 751.4 457.9 C757.9 455.7 768.9 453.2 775.5 451.3 C782.1 449.5 788.3 447.7 790.9 446.9"/>
<path d="M790.9 446.9 C793.5 449.5 801.2 459.2 806.3 462.3 C811.4 465.4 816.2 464.5 821.7 465.6 C827.2 466.7 833.4 467.6 839.3 468.9 C845.1 470.2 851.0 472.4 856.8 473.3 C862.7 474.2 869.7 474.6 874.4 474.4 C879.2 474.2 883.6 472.6 885.4 472.2"/>
<path d="M830.5 443.6 C831.2 445.3 834.9 449.9 834.9 453.5 C834.9 457.2 831.2 463.6 830.5 465.6"/>
<path d="M843.7 434.8 C845.9 436.1 852.5 440.5 856.8 442.5 C861.2 444.6 866.4 444.7 870.0 446.9 C873.7 449.1 876.3 451.5 878.8 455.7 C881.4 459.9 884.3 469.5 885.4 472.2"/>
<path d="M885.4 472.2 C886.9 470.9 892.1 467.6 894.2 464.5 C896.3 461.4 897.3 455.4 897.9 453.5"/>
<path d="M736.0 464.5 C741.5 467.3 763.4 478.3 768.9 481.0"/>
<path d="M583.0 478.6 C584.8 477.4 589.7 473.9 593.5 471.5 C597.4 469.2 602.3 466.3 605.9 464.5 C609.4 462.8 613.2 461.6 614.6 461.0"/>
<path d="M614.6 461.0 C616.1 463.3 619.9 470.7 623.4 475.1 C627.0 479.5 631.4 483.9 635.7 487.4 C640.1 490.9 644.8 493.5 649.8 496.2 C654.8 498.8 661.2 500.6 665.6 503.2 C670.0 505.8 674.4 510.5 676.2 512.0"/>
<path d="M676.2 512.0 C678.2 512.3 683.5 513.5 688.5 513.7 C693.5 514.0 700.2 513.9 706.1 513.7 C711.9 513.6 718.4 513.2 723.7 512.9 C728.9 512.6 735.4 512.1 737.7 512.0"/>
<path d="M676.2 512.0 C677.1 514.0 680.0 519.9 681.5 524.3 C682.9 528.7 684.1 534.0 685.0 538.4 C685.9 542.8 686.2 546.9 686.7 550.7 C687.3 554.5 688.2 559.3 688.5 561.0"/>
<path d="M676.2 512.0 C674.7 514.0 670.6 520.5 667.4 524.3 C664.2 528.1 659.2 531.3 656.8 534.8 C654.5 538.4 654.5 541.0 653.3 545.4 C652.2 549.8 650.4 558.4 649.8 561.0"/>
<path d="M583.0 519.0 C584.8 518.1 590.0 514.9 593.5 513.7 C597.1 512.6 603.1 510.2 604.1 512.0 C605.1 513.7 600.3 520.5 599.7 524.3 C599.1 528.1 600.4 533.1 600.6 534.8"/>
<path d="M604.1 512.0 C606.4 511.4 612.9 509.6 618.2 508.5 C623.4 507.3 630.5 507.0 635.7 505.0 C641.0 502.9 647.5 497.6 649.8 496.2"/>
<path d="M660.4 461.0 C661.5 462.5 665.1 467.4 667.4 469.8 C669.7 472.1 670.9 474.8 674.4 475.1 C677.9 475.4 684.4 472.7 688.5 471.5 C692.6 470.4 696.1 469.8 699.0 468.0 C702.0 466.3 704.9 462.2 706.1 461.0"/>
<path d="M674.4 475.1 C673.8 477.1 670.6 481.2 670.9 487.4 C671.2 493.5 675.3 507.9 676.2 512.0"/>
<path d="M731.6 464.5 C731.4 467.4 731.1 476.2 730.7 482.1 C730.3 488.0 728.6 493.5 728.9 499.7 C729.2 505.8 731.0 512.9 732.5 519.0 C733.9 525.2 736.0 531.6 737.7 536.6 C739.5 541.6 742.1 546.9 743.0 548.9"/>
<path d="M676.2 512.0 C678.8 513.7 687.0 519.3 692.0 522.5 C697.0 525.8 701.4 529.3 706.1 531.3 C710.8 533.4 714.9 534.0 720.1 534.8 C725.4 535.7 734.8 536.3 737.7 536.6"/>
<path d="M618.2 561.0 C619.0 559.0 620.5 551.8 623.4 548.9 C626.4 546.0 630.8 544.2 635.7 543.6 C640.7 543.1 650.4 545.1 653.3 545.4"/>
<path d="M699.0 468.0 C700.8 470.4 706.7 477.7 709.6 482.1 C712.5 486.5 715.5 492.4 716.6 494.4"/>
<path d="M743.0 534.8 C744.8 533.7 749.7 531.0 753.5 527.8 C757.4 524.6 762.0 517.6 765.9 515.5 C769.7 513.5 774.9 517.0 776.4 515.5 C777.9 514.0 773.8 510.5 774.6 506.7 C775.5 502.9 778.8 497.6 781.7 492.6 C784.6 487.7 788.1 480.9 792.2 476.8 C796.3 472.7 801.9 469.8 806.3 468.0 C810.7 466.3 816.6 466.6 818.6 466.3"/>
<path d="M806.3 461.0 C806.6 461.9 806.0 465.4 808.1 466.3 C810.1 467.2 814.2 465.4 818.6 466.3 C823.0 467.2 829.4 470.1 834.4 471.5 C839.4 473.0 843.2 474.5 848.5 475.1 C853.8 475.7 861.7 474.6 866.1 475.1 C870.5 475.5 871.8 478.1 874.9 477.7 C877.9 477.3 882.9 473.3 884.5 472.4"/>
<path d="M818.6 466.3 C817.1 469.8 813.3 480.0 809.8 487.4 C806.3 494.7 800.4 504.1 797.5 510.2 C794.6 516.4 792.8 519.3 792.2 524.3 C791.6 529.3 793.4 534.0 794.0 540.1 C794.6 546.2 795.5 557.6 795.7 561.0"/>
<path d="M765.9 515.5 C767.0 517.6 771.1 523.1 772.9 527.8 C774.6 532.5 774.6 538.1 776.4 543.6 C778.2 549.2 782.3 558.1 783.4 561.0"/>
<path d="M845.0 540.1 C846.2 538.1 849.1 531.9 852.0 527.8 C854.9 523.7 859.9 519.9 862.6 515.5 C865.2 511.1 866.7 505.5 867.8 501.4 C869.0 497.3 868.4 494.8 869.6 490.9 C870.8 486.9 874.0 479.9 874.9 477.7"/>
<path d="M792.2 548.9 C794.6 546.6 801.9 538.8 806.3 534.8 C810.7 530.9 814.5 525.8 818.6 525.2 C822.7 524.6 827.7 529.1 830.9 531.3 C834.1 533.5 835.6 536.9 837.9 538.4 C840.3 539.8 843.8 539.8 845.0 540.1"/>
<path d="M845.0 540.1 C848.5 539.8 860.2 539.8 866.1 538.4 C871.9 536.9 875.5 534.0 880.1 531.3 C884.8 528.7 891.3 525.5 894.2 522.5 C897.1 519.6 897.1 515.2 897.7 513.7"/>
<path d="M845.0 540.1 C846.7 541.6 852.0 545.4 855.5 548.9 C859.0 552.4 864.3 559.0 866.1 561.0"/>
<path d="M874.9 477.7 C875.7 479.3 878.1 484.3 880.1 487.4 C882.2 490.5 884.8 492.9 887.2 496.2 C889.5 499.4 892.5 503.8 894.2 506.7 C896.0 509.6 897.1 512.6 897.7 513.7"/>
<path d="M743.0 552.4 C745.9 553.9 757.7 559.6 760.6 561.0"/>
<path d="M605.9 574.2 C605.6 575.8 602.9 580.2 604.1 583.9 C605.3 587.5 611.1 592.4 612.9 596.2 C614.6 600.0 615.2 602.6 614.6 606.7 C614.1 610.8 611.4 615.9 609.4 620.8 C607.3 625.6 603.5 633.2 602.3 635.7"/>
<path d="M660.4 573.3 C661.5 575.1 664.5 579.8 667.4 583.9 C670.3 588.0 675.6 592.9 677.9 597.9 C680.3 602.9 680.4 608.2 681.5 613.7 C682.5 619.3 683.8 625.5 684.1 631.3 C684.4 637.2 683.2 643.5 683.2 648.9 C683.2 654.4 684.0 661.5 684.1 664.0"/>
<path d="M681.5 613.7 C683.8 613.5 690.8 614.3 695.5 612.0 C700.2 609.6 704.9 604.4 709.6 599.7 C714.3 595.0 719.6 588.5 723.7 583.9 C727.8 579.2 732.5 573.6 734.2 571.5"/>
<path d="M681.5 613.7 C679.1 614.6 672.1 617.3 667.4 619.0 C662.7 620.8 657.7 622.2 653.3 624.3 C648.9 626.3 646.0 629.3 641.0 631.3 C636.0 633.4 629.9 635.9 623.4 636.6 C617.0 637.3 605.9 635.9 602.3 635.7"/>
<path d="M614.6 606.7 C616.7 605.8 622.6 604.4 627.0 601.4 C631.4 598.5 636.6 592.6 641.0 589.1 C645.4 585.6 651.3 581.8 653.3 580.3"/>
<path d="M684.1 631.3 C687.2 630.2 697.1 624.9 702.6 624.3 C708.0 623.7 711.6 626.1 716.6 627.8 C721.6 629.6 728.1 633.4 732.5 634.8 C736.8 636.3 741.2 636.3 743.0 636.6"/>
<path d="M702.6 624.3 C703.7 626.1 706.1 631.3 709.6 634.8 C713.1 638.4 718.1 642.5 723.7 645.4 C729.2 648.3 739.8 651.3 743.0 652.4"/>
<path d="M602.3 635.7 C599.1 634.1 586.2 627.7 583.0 626.1"/>
<path d="M602.3 635.7 C605.0 637.9 612.6 644.2 618.2 648.9 C623.7 653.6 632.8 661.5 635.7 664.0"/>
<path d="M614.6 561.0 C615.2 562.2 614.6 566.6 618.2 568.0 C621.7 569.5 629.9 570.4 635.7 569.8 C641.6 569.2 649.2 563.9 653.3 564.5 C657.4 565.1 659.2 571.8 660.4 573.3"/>
<path d="M660.4 573.3 C662.7 572.1 670.9 568.3 674.4 566.3 C677.9 564.2 680.3 561.9 681.5 561.0"/>
<path d="M699.0 561.0 C699.6 562.2 700.2 566.0 702.6 568.0 C704.9 570.1 711.4 572.4 713.1 573.3"/>
<path d="M625.2 607.6 C623.7 608.0 616.7 609.2 616.4 610.2 C616.1 611.3 622.3 613.2 623.4 613.7"/>
<path d="M798.4 573.3 C797.4 575.4 793.8 581.2 792.2 585.6 C790.6 590.0 790.5 595.0 788.7 599.7 C787.0 604.4 784.3 608.8 781.7 613.7 C779.0 618.7 775.8 624.0 772.9 629.6 C770.0 635.1 765.6 644.2 764.1 647.2"/>
<path d="M798.4 573.3 C800.3 575.1 806.7 580.0 809.8 583.9 C812.9 587.7 813.9 593.2 816.8 596.2 C819.8 599.1 824.5 598.5 827.4 601.4 C830.3 604.4 833.0 610.2 834.4 613.7 C835.9 617.3 836.8 619.0 836.2 622.5 C835.6 626.1 833.0 631.9 830.9 634.8 C828.9 637.8 825.3 637.2 823.9 640.1 C822.4 643.1 823.0 648.4 822.1 652.4 C821.2 656.4 819.2 662.1 818.6 664.0"/>
<path d="M798.4 573.3 C801.8 574.5 812.0 579.6 818.6 580.3 C825.2 581.1 832.4 577.4 837.9 577.7 C843.5 578.0 847.3 580.2 852.0 582.1 C856.7 584.0 862.0 587.4 866.1 589.1 C870.2 590.9 872.8 594.4 876.6 592.6 C880.4 590.9 886.0 583.9 888.9 578.6 C891.9 573.3 893.3 563.9 894.2 561.0"/>
<path d="M836.2 622.5 C838.2 620.2 843.5 612.0 848.5 608.5 C853.5 605.0 861.1 603.5 866.1 601.4 C871.1 599.4 876.3 597.0 878.4 596.2"/>
<path d="M743.0 582.1 C744.5 584.4 749.7 590.9 751.8 596.2 C753.8 601.4 755.3 608.5 755.3 613.7 C755.3 619.0 751.2 622.2 751.8 627.8 C752.4 633.4 757.7 643.9 758.8 647.2"/>
<path d="M743.0 636.6 C744.5 636.9 749.2 636.6 751.8 638.4 C754.4 640.1 757.7 645.7 758.8 647.2"/>
<path d="M758.8 647.2 C762.0 648.3 772.0 651.4 778.2 654.2 C784.3 657.0 792.8 662.4 795.7 664.0"/>
<path d="M823.9 640.1 C825.6 641.6 831.5 644.9 834.4 648.9 C837.4 652.9 840.3 661.5 841.5 664.0"/>
<path d="M798.4 573.3 C796.5 572.1 790.3 568.3 787.0 566.3 C783.6 564.2 779.6 561.9 778.2 561.0"/>
<path d="M798.4 573.3 C799.1 571.8 800.9 566.6 802.8 564.5 C804.7 562.5 808.6 561.6 809.8 561.0"/>
<path d="M866.1 561.0 C866.7 563.3 867.8 569.8 869.6 575.1 C871.4 580.3 875.5 589.7 876.6 592.6"/>
<path d="M764.1 647.2 C765.9 646.6 770.5 642.2 774.6 643.6 C778.8 645.1 785.2 652.5 788.7 655.9 C792.2 659.3 794.6 662.7 795.7 664.0"/>
<path d="M495.1 584.1 C497.1 582.2 503.0 575.7 507.4 572.6 C511.8 569.6 516.8 567.7 521.5 565.6 C526.2 563.6 530.8 562.1 535.5 560.3 C540.2 558.6 544.9 557.4 549.6 555.1 C554.3 552.7 559.6 548.6 563.7 546.3 C567.8 543.9 572.5 541.9 574.2 541.0"/>
<path d="M507.4 558.6 C508.6 557.4 512.1 554.5 514.4 551.5 C516.8 548.6 520.3 542.8 521.5 541.0"/>
<path d="M495.1 584.1 C497.7 586.6 506.5 597.4 510.9 599.0 C515.3 600.6 517.9 596.7 521.5 593.7 C525.0 590.8 529.1 584.7 532.0 581.4 C534.9 578.2 537.9 575.6 539.0 574.4"/>
<path d="M510.9 599.0 C513.8 598.4 522.6 594.9 528.5 595.5 C534.4 596.1 540.2 599.9 546.1 602.5 C551.9 605.2 557.5 608.7 563.7 611.3 C569.8 614.0 579.8 617.2 583.0 618.4"/>
<path d="M517.9 611.3 C518.5 610.2 519.7 606.9 521.5 604.3 C523.2 601.7 527.3 597.0 528.5 595.5"/>
<path d="M470.5 563.9 C472.2 563.0 477.8 560.6 481.0 558.6 C484.2 556.5 488.1 554.5 489.8 551.5 C491.6 548.6 491.3 542.8 491.6 541.0"/>
<path d="M468.7 563.9 C470.5 564.7 475.7 567.4 479.3 569.1 C482.8 570.9 488.1 573.5 489.8 574.4"/>
<path d="M312.1 569.2 C313.7 567.8 318.6 562.9 321.8 560.7 C325.1 558.5 327.9 555.4 331.5 555.8 C335.2 556.2 339.6 562.3 343.7 563.1 C347.7 563.9 352.2 562.7 355.8 560.7 C359.5 558.7 362.3 553.0 365.5 551.0 C368.8 548.9 371.6 551.0 375.2 548.5 C378.9 546.1 383.7 539.2 387.4 536.4 C391.0 533.6 393.4 531.6 397.1 531.6 C400.7 531.6 405.6 536.4 409.2 536.4 C412.9 536.4 415.7 534.0 418.9 531.6 C422.2 529.1 425.4 525.9 428.6 521.8 C431.9 517.8 435.1 510.9 438.3 507.3 C441.6 503.6 446.4 501.2 448.0 500.0"/>
<path d="M312.1 569.2 C311.7 571.4 308.5 579.7 309.7 582.5 C310.9 585.4 317.8 585.6 319.4 586.2"/>
<path d="M312.1 569.2 C310.5 568.2 304.8 566.1 302.4 563.1 C300.0 560.1 296.8 555.0 297.6 551.0 C298.4 546.9 304.4 542.9 307.3 538.8 C310.1 534.8 311.7 530.7 314.6 526.7 C317.4 522.7 322.6 516.6 324.3 514.6"/>
<path d="M363.1 576.5 C363.5 578.3 363.9 583.9 365.5 587.4 C367.1 590.8 371.2 593.9 372.8 597.1 C374.4 600.3 374.4 604.2 375.2 606.8 C376.0 609.4 377.3 611.9 377.7 612.9"/>
<path d="M363.1 576.5 C361.9 575.0 359.1 570.2 355.8 568.0 C352.6 565.7 345.7 563.9 343.7 563.1"/>
<path d="M363.1 576.5 C365.9 575.8 375.6 575.0 380.1 572.8 C384.5 570.6 387.0 565.9 389.8 563.1 C392.6 560.3 393.8 558.3 397.1 555.8 C400.3 553.4 405.6 551.4 409.2 548.5 C412.9 545.7 416.1 542.1 418.9 538.8 C421.8 535.6 423.0 531.6 426.2 529.1 C429.4 526.7 436.3 525.1 438.3 524.3"/>
<path d="M283.0 589.8 C285.4 589.0 293.1 586.2 297.6 585.0 C302.0 583.7 307.7 582.9 309.7 582.5"/>
<path d="M358.2 612.9 C357.4 614.3 353.4 618.3 353.4 621.4 C353.4 624.4 355.8 627.8 358.2 631.1 C360.7 634.3 365.1 637.5 368.0 640.8 C370.8 644.0 374.0 648.9 375.2 650.5"/>
<path d="M428.6 500.0 C429.0 502.4 429.4 510.5 431.1 514.6 C432.7 518.6 436.3 520.2 438.3 524.3 C440.4 528.3 441.6 534.4 443.2 538.8 C444.8 543.3 447.2 548.9 448.0 551.0"/>
</g>
<g fill="none" stroke="#a9add2" stroke-width="1.5" stroke-linejoin="round" stroke-linecap="round">
<path d="M493.8 415.3 C492.9 415.4 489.7 414.8 488.5 416.2 C487.3 417.5 487.6 420.6 486.7 423.2 C485.9 425.8 484.2 429.1 483.2 432.0 C482.2 434.9 481.3 437.6 480.6 440.8 C479.8 444.0 479.3 447.8 478.8 451.3 C478.4 454.8 478.1 458.9 477.9 461.9 C477.8 464.8 478.0 465.7 477.9 468.9 C477.9 472.1 477.7 479.0 477.6 481.0"/>
<path d="M478.9 461.0 C479.0 463.9 479.1 472.7 479.3 478.6 C479.5 484.4 480.0 493.2 480.1 496.2"/>
<path d="M583.0 574.0 C585.3 574.1 593.2 574.6 597.0 574.6 C600.8 574.6 600.9 574.0 605.9 574.2 C610.9 574.4 619.1 575.1 627.0 576.0 C634.9 576.9 645.4 578.8 653.3 579.5 C661.2 580.2 667.4 580.8 674.4 580.3 C681.4 579.8 689.6 578.0 695.5 576.8 C701.4 575.6 706.1 573.7 709.6 573.3 C713.1 572.9 714.2 573.5 716.6 574.2 C719.0 574.9 721.1 577.6 723.7 577.7 C726.4 577.8 729.3 576.3 732.5 575.0 C735.7 573.7 739.2 570.7 743.0 569.8 C746.8 568.9 750.5 569.8 755.0 569.5 C759.5 569.2 765.0 568.1 770.0 568.0 C775.0 567.9 780.3 568.3 785.0 569.0 C789.7 569.7 795.8 571.5 798.0 572.0"/>
<path d="M796.6 561.0 C799.4 560.2 807.6 558.0 813.3 555.9 C819.0 553.9 825.6 551.5 830.9 548.9 C836.2 546.3 842.0 543.1 845.0 540.1 C847.9 537.2 846.2 534.8 848.5 531.3 C850.8 527.8 856.1 523.1 859.0 519.0 C862.0 514.9 864.3 511.4 866.1 506.7 C867.8 502.0 868.1 495.7 869.6 490.9 C871.1 486.1 872.4 480.8 874.9 477.7 C877.4 474.6 882.9 473.3 884.5 472.4"/>
<path d="M798.4 573.3 C797.4 575.4 793.8 581.2 792.2 585.6 C790.6 590.0 790.5 595.0 788.7 599.7 C787.0 604.4 784.3 608.8 781.7 613.7 C779.0 618.7 775.8 624.0 772.9 629.6 C770.0 635.1 766.3 643.8 764.1 647.2 C761.9 650.5 760.4 649.4 759.7 649.8"/>
<path d="M741.5 381.0 C742.4 383.2 744.4 389.4 747.0 394.2 C749.5 398.9 753.5 404.8 756.8 409.6 C760.1 414.3 763.6 418.4 766.7 422.8 C769.8 427.2 771.5 431.9 775.5 435.9 C779.6 440.0 786.9 444.0 790.9 446.9 C794.9 449.9 795.3 450.6 799.7 453.5 C804.1 456.5 811.4 462.1 817.3 464.5 C823.1 466.9 828.3 466.3 834.9 467.8 C841.5 469.3 850.3 472.2 856.8 473.3 C863.4 474.4 869.7 474.6 874.4 474.4 C879.2 474.2 883.6 472.6 885.4 472.2"/>
<path d="M756.8 409.6 C755.9 411.4 753.0 416.5 751.4 420.6 C749.7 424.6 748.8 429.4 747.0 433.7 C745.1 438.1 742.2 441.8 740.4 446.9 C738.5 452.1 736.8 458.8 736.0 464.5 C735.2 470.2 735.6 478.3 735.5 481.0"/>
<path d="M684.5 392.4 C685.9 391.4 690.0 388.2 692.5 386.3 C694.9 384.4 698.3 381.9 699.5 381.0"/>
<path d="M623.9 457.5 C626.2 458.1 633.8 460.6 637.9 461.0 C642.0 461.4 645.3 461.1 648.5 460.1 C651.7 459.1 654.4 456.5 657.3 454.8 C660.2 453.2 662.9 451.9 666.1 450.5 C669.3 449.0 673.1 447.2 676.6 446.1 C680.1 444.9 684.0 444.0 687.2 443.4 C690.4 442.8 693.3 442.8 696.0 442.5 C698.6 442.2 701.8 441.8 703.0 441.7"/>
<path d="M584.4 643.9 C585.7 644.6 589.4 646.1 592.0 648.0 C594.6 649.9 597.5 652.3 600.0 655.0 C602.5 657.7 605.8 662.5 607.0 664.0"/>
<path d="M676.2 512.0 C677.1 514.0 680.0 519.9 681.5 524.3 C682.9 528.7 684.1 534.0 685.0 538.4 C685.9 542.8 686.2 546.9 686.7 550.7 C687.3 554.5 688.2 559.3 688.5 561.0"/>
<path d="M737.7 536.6 C738.6 537.8 742.1 542.5 743.0 543.6"/>
</g>
<path d="M597.0 574.6 C598.5 574.5 600.9 574.0 605.9 574.2 C610.9 574.4 619.1 575.1 627.0 576.0 C634.9 576.9 645.4 578.8 653.3 579.5 C661.2 580.2 667.4 580.8 674.4 580.3 C681.4 579.8 689.6 578.0 695.5 576.8 C701.4 575.6 706.1 573.7 709.6 573.3 C713.1 572.9 714.2 573.5 716.6 574.2 C719.0 574.9 721.1 577.6 723.7 577.7 C726.4 577.8 729.3 576.3 732.5 575.0 C735.7 573.7 739.2 570.7 743.0 569.8 C746.8 568.9 750.5 569.8 755.0 569.5 C759.5 569.2 765.0 568.1 770.0 568.0 C775.0 567.9 780.3 568.3 785.0 569.0 C789.7 569.7 795.8 571.5 798.0 572.0" fill="none" stroke="#9a9ec6" stroke-width="2.8"/><path d="M597.0 574.6 C598.5 574.5 600.9 574.0 605.9 574.2 C610.9 574.4 619.1 575.1 627.0 576.0 C634.9 576.9 645.4 578.8 653.3 579.5 C661.2 580.2 667.4 580.8 674.4 580.3 C681.4 579.8 689.6 578.0 695.5 576.8 C701.4 575.6 706.1 573.7 709.6 573.3 C713.1 572.9 714.2 573.5 716.6 574.2 C719.0 574.9 721.1 577.6 723.7 577.7 C726.4 577.8 729.3 576.3 732.5 575.0 C735.7 573.7 739.2 570.7 743.0 569.8 C746.8 568.9 750.5 569.8 755.0 569.5 C759.5 569.2 765.0 568.1 770.0 568.0 C775.0 567.9 780.3 568.3 785.0 569.0 C789.7 569.7 795.8 571.5 798.0 572.0" fill="none" stroke="#d9dbec" stroke-width="0.8"/>
<path d="M465.2 556.8 C466.1 555.8 468.1 552.9 470.5 550.7 C472.9 548.5 475.5 546.2 479.3 543.6 C483.1 541.0 488.6 537.9 493.3 534.8 C498.0 531.7 503.3 527.7 507.4 525.2 C511.5 522.7 513.9 522.4 518.0 520.0 C522.1 517.6 527.3 514.0 532.0 511.0 C536.7 508.1 540.7 505.7 546.0 502.3 C551.3 498.9 557.5 494.7 563.7 490.9 C569.9 487.1 578.5 482.3 583.0 479.5 C587.5 476.7 587.5 476.1 590.5 474.2 C593.5 472.3 597.2 470.1 601.0 468.0 C604.8 465.9 609.6 463.8 613.3 461.9 C617.0 460.0 620.6 458.8 623.0 456.6 C625.4 454.4 625.5 451.6 627.4 448.7 C629.3 445.8 632.0 441.9 634.4 439.0 C636.8 436.1 639.5 433.9 641.5 431.1 C643.5 428.3 645.0 425.1 646.7 422.3 C648.5 419.5 649.4 416.9 652.0 414.4 C654.6 411.9 659.1 409.9 662.6 407.4 C666.1 404.9 669.5 402.0 673.1 399.5 C676.8 397.0 682.6 393.6 684.5 392.4" fill="none" stroke="#b4b7d3" stroke-width="4.2" stroke-linecap="round"/>
<path d="M470.5 576.2 C472.2 576.9 478.1 578.3 481.0 580.6 C483.9 582.9 485.4 587.4 488.0 590.2 C490.6 593.0 493.6 595.2 496.8 597.3 C500.0 599.3 503.9 600.2 507.4 602.5 C510.9 604.8 514.8 608.1 518.0 611.3 C521.2 614.5 524.4 619.2 526.7 621.9 C529.0 624.5 529.1 625.0 532.0 627.2 C534.9 629.4 540.8 633.2 544.3 635.0 C547.8 636.8 549.8 637.0 553.0 637.7 C556.2 638.5 560.5 639.0 563.7 639.5 C567.0 640.0 569.0 640.3 572.5 641.0 C576.0 641.7 582.4 643.4 584.4 643.9" fill="none" stroke="#b4b7d3" stroke-width="4.2" stroke-linecap="round"/>
<path d="M423.0 582.3 C423.6 581.3 425.0 578.7 426.5 576.2 C428.0 573.7 429.4 570.3 431.8 567.4 C434.2 564.5 437.7 561.0 440.6 558.6 C443.5 556.2 446.8 554.3 449.4 553.3 C452.0 552.3 454.1 551.7 456.4 552.4 C458.7 553.1 461.3 555.8 463.4 557.7 C465.4 559.6 467.5 561.7 468.7 563.9 C469.9 566.1 470.2 568.8 470.5 570.9 C470.8 573.0 470.5 575.3 470.5 576.2" fill="none" stroke="#b4b7d3" stroke-width="4.2" stroke-linecap="round"/>
<path d="M428.6 572.8 C428.2 574.0 427.8 578.3 426.2 580.1 C424.6 581.9 421.3 582.1 418.9 583.7 C416.5 585.4 414.1 587.6 411.6 589.8 C409.2 592.0 406.8 595.3 404.4 597.1 C401.9 598.9 399.9 599.5 397.1 600.7 C394.2 601.9 390.2 602.8 387.4 604.4 C384.5 606.0 382.1 609.0 380.1 610.4 C378.1 611.9 377.7 612.7 375.2 612.9 C372.8 613.1 368.4 611.7 365.5 611.7 C362.7 611.7 360.3 613.5 358.2 612.9 C356.2 612.3 354.2 608.8 353.4 608.0" fill="none" stroke="#b4b7d3" stroke-width="4.2" stroke-linecap="round"/>
<path d="M418.9 583.7 C420.5 583.5 426.0 582.1 428.6 582.5 C431.3 582.9 433.7 585.6 434.7 586.2" fill="none" stroke="#b4b7d3" stroke-width="4.2" stroke-linecap="round"/>
<path d="M470.5 576.2 C472.1 576.2 476.6 576.1 480.0 576.0 C483.4 575.9 489.2 575.6 491.0 575.5" fill="none" stroke="#b4b7d3" stroke-width="4.2" stroke-linecap="round"/>
<path d="M456.4 552.4 C457.3 551.7 459.6 548.3 462.0 548.0 C464.4 547.7 469.1 550.2 470.5 550.7" fill="none" stroke="#b4b7d3" stroke-width="4.2" stroke-linecap="round"/>
<path d="M465.2 556.8 C466.1 555.8 468.1 552.9 470.5 550.7 C472.9 548.5 475.5 546.2 479.3 543.6 C483.1 541.0 488.6 537.9 493.3 534.8 C498.0 531.7 503.3 527.7 507.4 525.2 C511.5 522.7 513.9 522.4 518.0 520.0 C522.1 517.6 527.3 514.0 532.0 511.0 C536.7 508.1 540.7 505.7 546.0 502.3 C551.3 498.9 557.5 494.7 563.7 490.9 C569.9 487.1 578.5 482.3 583.0 479.5 C587.5 476.7 587.5 476.1 590.5 474.2 C593.5 472.3 597.2 470.1 601.0 468.0 C604.8 465.9 609.6 463.8 613.3 461.9 C617.0 460.0 620.6 458.8 623.0 456.6 C625.4 454.4 625.5 451.6 627.4 448.7 C629.3 445.8 632.0 441.9 634.4 439.0 C636.8 436.1 639.5 433.9 641.5 431.1 C643.5 428.3 645.0 425.1 646.7 422.3 C648.5 419.5 649.4 416.9 652.0 414.4 C654.6 411.9 659.1 409.9 662.6 407.4 C666.1 404.9 669.5 402.0 673.1 399.5 C676.8 397.0 682.6 393.6 684.5 392.4" fill="none" stroke="#6d7199" stroke-width="2.4" stroke-linecap="round"/>
<path d="M470.5 576.2 C472.2 576.9 478.1 578.3 481.0 580.6 C483.9 582.9 485.4 587.4 488.0 590.2 C490.6 593.0 493.6 595.2 496.8 597.3 C500.0 599.3 503.9 600.2 507.4 602.5 C510.9 604.8 514.8 608.1 518.0 611.3 C521.2 614.5 524.4 619.2 526.7 621.9 C529.0 624.5 529.1 625.0 532.0 627.2 C534.9 629.4 540.8 633.2 544.3 635.0 C547.8 636.8 549.8 637.0 553.0 637.7 C556.2 638.5 560.5 639.0 563.7 639.5 C567.0 640.0 569.0 640.3 572.5 641.0 C576.0 641.7 582.4 643.4 584.4 643.9" fill="none" stroke="#6d7199" stroke-width="2.4" stroke-linecap="round"/>
<path d="M423.0 582.3 C423.6 581.3 425.0 578.7 426.5 576.2 C428.0 573.7 429.4 570.3 431.8 567.4 C434.2 564.5 437.7 561.0 440.6 558.6 C443.5 556.2 446.8 554.3 449.4 553.3 C452.0 552.3 454.1 551.7 456.4 552.4 C458.7 553.1 461.3 555.8 463.4 557.7 C465.4 559.6 467.5 561.7 468.7 563.9 C469.9 566.1 470.2 568.8 470.5 570.9 C470.8 573.0 470.5 575.3 470.5 576.2" fill="none" stroke="#6d7199" stroke-width="2.4" stroke-linecap="round"/>
<path d="M428.6 572.8 C428.2 574.0 427.8 578.3 426.2 580.1 C424.6 581.9 421.3 582.1 418.9 583.7 C416.5 585.4 414.1 587.6 411.6 589.8 C409.2 592.0 406.8 595.3 404.4 597.1 C401.9 598.9 399.9 599.5 397.1 600.7 C394.2 601.9 390.2 602.8 387.4 604.4 C384.5 606.0 382.1 609.0 380.1 610.4 C378.1 611.9 377.7 612.7 375.2 612.9 C372.8 613.1 368.4 611.7 365.5 611.7 C362.7 611.7 360.3 613.5 358.2 612.9 C356.2 612.3 354.2 608.8 353.4 608.0" fill="none" stroke="#6d7199" stroke-width="2.4" stroke-linecap="round"/>
<path d="M418.9 583.7 C420.5 583.5 426.0 582.1 428.6 582.5 C431.3 582.9 433.7 585.6 434.7 586.2" fill="none" stroke="#6d7199" stroke-width="2.4" stroke-linecap="round"/>
<path d="M470.5 576.2 C472.1 576.2 476.6 576.1 480.0 576.0 C483.4 575.9 489.2 575.6 491.0 575.5" fill="none" stroke="#6d7199" stroke-width="2.4" stroke-linecap="round"/>
<path d="M456.4 552.4 C457.3 551.7 459.6 548.3 462.0 548.0 C464.4 547.7 469.1 550.2 470.5 550.7" fill="none" stroke="#6d7199" stroke-width="2.4" stroke-linecap="round"/>
<path d="M353.4 608.0 C352.2 607.6 348.3 606.4 346.1 605.6 C343.9 604.8 341.5 604.6 340.0 603.2 C338.6 601.7 339.0 599.1 337.6 597.1 C336.2 595.1 333.6 592.6 331.5 591.0 C329.5 589.4 327.5 588.2 325.5 587.4 C323.5 586.6 320.4 586.4 319.4 586.2" fill="none" stroke="#a9acd0" stroke-width="3" stroke-linecap="round"/>
<path d="M353.4 608.0 C352.2 607.6 348.3 606.4 346.1 605.6 C343.9 604.8 341.5 604.6 340.0 603.2 C338.6 601.7 339.0 599.1 337.6 597.1 C336.2 595.1 333.6 592.6 331.5 591.0 C329.5 589.4 327.5 588.2 325.5 587.4 C323.5 586.6 320.4 586.4 319.4 586.2" fill="none" stroke="#8f93b8" stroke-width="1.2" stroke-linecap="round"/>
<g fill="none" stroke="#c3c6dc" stroke-width=".7" opacity=".9"><path d="M459 560v16M461.500 559v18M464 560v17M466.500 562v14M457 563h11M457 566h12M456 569h13M455 572h14M454 575h14M452 578h12"/></g>
<circle cx="507.200" cy="635.500" r="1.700" fill="#fff" stroke="#777" stroke-width=".9"/>
<g fill="#303030" stroke="#fff" stroke-width="2.2" stroke-linejoin="round" paint-order="stroke" stroke-opacity=".85" font-size="9.55" letter-spacing="-0.12" transform="translate(-0.3 0.9)">
<text x="436.0" y="424.6">Llucalcari</text>
<text x="482.5" y="424.6">Sóller</text>
<text x="602" y="410.5">Binibona</text>
<text x="564" y="435.5">Biniarroi</text>
<text x="530" y="472.4">Alaró</text>
<text x="465.2" y="485.6">es Garrigó</text>
<text x="426.5" y="510.2">s'Esgleieta</text>
<text x="488" y="519.9">Santa Maria del Camí</text>
<text x="514" y="545">Pòrtol Nou</text>
<text x="362.5" y="544.5">Son Serralta</text>
<text x="296" y="578.5">Andratx</text>
<text x="351" y="586.5">Calvià</text>
<text x="440.6" y="582.8">Palma</text>
<text x="473" y="592.5">Son Banya</text>
<text x="487" y="567.7">es Pinaret</text>
<text x="537.6" y="589.9">Son Gual II</text>
<text x="605.5" y="460.5">Inca</text>
<text x="667" y="422">sa Pobla</text>
<text x="693" y="447.7">Muro</text>
<text x="703" y="419.5">ses Casetes des Capellans</text>
<text x="699" y="474.4">Santa Margalida</text>
<text x="615.5" y="496.2">Jornets</text>
<text x="589.7" y="532.7">Laiar</text>
<text x="727.5" y="546.3">Petra</text>
<text x="876" y="481.7">Artà</text>
<text x="789" y="549.4">Sant Llorenç des Cardassa</text>
<text x="780.5" y="582">Manacor</text>
<text x="666.5" y="623.4">Porreres</text>
<text x="581.5" y="646">Llucmajor</text>
<text x="743.9" y="658.8">Felanitx</text>
</g>
<g fill="#fff" stroke="#686d8c" stroke-width="0.9">
<circle cx="455.7" cy="416.5" r="1.7"/>
<circle cx="494" cy="415.5" r="1.7"/>
<circle cx="619.5" cy="401.5" r="1.7"/>
<circle cx="580.7" cy="426.7" r="1.7"/>
<circle cx="540" cy="463.5" r="1.7"/>
<circle cx="448.2" cy="501.3" r="1.7"/>
<circle cx="532" cy="510" r="1.7"/>
<circle cx="535.5" cy="536.5" r="1.7"/>
<circle cx="387" cy="535" r="1.7"/>
<circle cx="312.3" cy="569.3" r="1.7"/>
<circle cx="364" cy="576.7" r="1.7"/>
<circle cx="494.7" cy="583.4" r="1.7"/>
<circle cx="507.6" cy="558.8" r="1.7"/>
<circle cx="560" cy="580" r="1.7"/>
<circle cx="614" cy="451.7" r="1.7"/>
<circle cx="684" cy="412.8" r="1.7"/>
<circle cx="704" cy="438.5" r="1.7"/>
<circle cx="757" cy="409.5" r="1.7"/>
<circle cx="629.7" cy="486.2" r="1.7"/>
<circle cx="599.7" cy="524.3" r="1.7"/>
<circle cx="738" cy="537.7" r="1.7"/>
<circle cx="884.2" cy="472.5" r="1.7"/>
<circle cx="844.5" cy="540.5" r="1.7"/>
<circle cx="798.2" cy="573.3" r="1.7"/>
<circle cx="683.2" cy="614.7" r="1.7"/>
<circle cx="602" cy="636" r="1.7"/>
<circle cx="760" cy="649.6" r="1.7"/>
</g>
<g fill="#444" stroke="#fff" stroke-width="1.8" paint-order="stroke" font-size="7" text-anchor="middle" stroke-opacity=".8">
<text x="671.5" y="450" transform="rotate(-17 671.5 450)">Ma-3500</text>
<text x="782" y="443" transform="rotate(30 782 443)">Ma-12</text>
<text x="834.4" y="471" transform="rotate(15 834.4 471)">Ma-12</text>
<text x="866.5" y="508" transform="rotate(-78 866.5 508)">Ma-15</text>
<text x="783" y="616" transform="rotate(-58 783 616)">Ma-14</text>
<text x="682" y="536" transform="rotate(80 682 536)">Ma-3231</text>
<text x="746.5" y="432" transform="rotate(-62 746.5 432)">3410</text>
<text x="896" y="521" transform="rotate(-75 896 521)">Ma-</text>
<text x="724" y="667" transform="rotate(-8 724 667)">6120</text>
</g>
<rect x="519.4" y="626.3" width="25" height="9" rx="1" fill="#9ea2c4"/><text x="531.9" y="633.7" font-size="7.8" fill="#fff" text-anchor="middle">Ma-19</text>
<path d="M443.2 555 L453.8 543.6 L458.2 542.8 L460.8 539.2 L469.6 513.7 L472.2 491.8 L479.3 496.2 L493.3 496.2 L500.4 513.7 L507.4 524.3 L493.3 538.4 L489.8 542.8 L493.3 542.8 L495 549 L494.7 551.5 L490.7 562 L491.2 574.4 L498.6 575.3 L507.4 572.6 L521.5 574 L535.5 573.5 L549.6 572.6 L563.7 571.8 L565.4 573.5 L583 574 L597 574.3" fill="none" stroke="#0000fe" stroke-width="2.8" stroke-linejoin="round" stroke-linecap="round"/>
<path d="M597 581 L591.8 556.8 L588.3 552.4 L583 538.4 L583 536.6 L598.8 534 L614.6 531.3 L628.7 529.6 L634 527 L648 524.3 L660.4 520.8 L670 517.3 L676.2 512 L678.8 512 L690.3 505 L693.8 505 L706 496.2 L713 494.4 L717.5 487.4 L731.6 481.2 L732.5 471.5 L731.6 464.5" fill="none" stroke="#0000fe" stroke-width="2.8" stroke-linejoin="round" stroke-linecap="round"/>
<g transform="translate(533.5,504.5)"><rect x="0" y="5" width="24" height="5.500" rx="1" fill="#e8731a"/><path d="M8 0h14.500v6H8z" fill="#f3e3c4" stroke="#c9a77a" stroke-width=".5"/><path d="M1.500 5.200l2.500-3.400h4v3.400z" fill="#f08a2c"/><path d="M3 4.800l1.500-2.200h2.600v2.200z" fill="#fbe9d2"/><rect x="0" y="9.300" width="24" height="1.600" fill="#6b3a12"/><circle cx="4.800" cy="10.600" r="2.100" fill="#222"/><circle cx="18.500" cy="10.600" r="2.100" fill="#222"/><circle cx="4.800" cy="10.600" r=".8" fill="#999"/><circle cx="18.500" cy="10.600" r=".8" fill="#999"/></g>
<g><path d="M472.7 486.6 L478.9 496.1 L485.09999999999997 486.6 Z" fill="#0000fe"/><circle cx="478.9" cy="478.6" r="9.8" fill="#fff" stroke="#0000fe" stroke-width="1.8"/><text x="478.9" y="482.40000000000003" text-anchor="middle" font-size="11" fill="#0000fe" font-family="'Liberation Sans',sans-serif">1</text></g>
<g><path d="M482.8 533.4 L489 542.9 L495.2 533.4 Z" fill="#0000fe"/><circle cx="489" cy="525.4" r="9.8" fill="#fff" stroke="#0000fe" stroke-width="1.8"/><text x="489" y="529.1999999999999" text-anchor="middle" font-size="11" fill="#0000fe" font-family="'Liberation Sans',sans-serif">2</text></g>
<g><path d="M590.8 572.5 L597 582.0 L603.2 572.5 Z" fill="#0000fe"/><circle cx="597" cy="564.5" r="9.8" fill="#fff" stroke="#0000fe" stroke-width="1.8"/><text x="597" y="568.3" text-anchor="middle" font-size="11" fill="#0000fe" font-family="'Liberation Sans',sans-serif">3</text></g>
<g><path d="M729.8 456 L736 465.5 L742.2 456 Z" fill="#0000fe"/><circle cx="736" cy="448" r="9.8" fill="#fff" stroke="#0000fe" stroke-width="1.8"/><text x="736" y="451.8" text-anchor="middle" font-size="11" fill="#0000fe" font-family="'Liberation Sans',sans-serif">4</text></g>
<circle cx="447.3" cy="565.6" r="9.8" fill="#fff"/><path d="M447.3 559.400l-6.200 5.600h1.800v5.600h3v-3.800h2.800v3.800h3v-5.600h1.800z" fill="#ff6d00"/>
</svg>
<div class="abs" style="left:9px;top:9px;width:25.500px;height:52px;background:#fff;border-radius:2px;box-shadow:0 1px 4px rgba(0,0,0,.35)"></div>
<div class="abs" style="left:9px;top:34.500px;width:25.500px;height:1px;background:#ddd"></div>
<svg class="abs" style="left:9px;top:9px" width="26" height="52" viewBox="0 0 26 52" stroke="#111" stroke-width="1.700"><path d="M7.600 13.200h10.800M13 7.800v10.800M7.600 39.500h10.800"/></svg>
<div class="abs" style="left:9px;top:69px;width:30.500px;height:30.500px;background:#fff;border-radius:4px;box-shadow:0 1px 4px rgba(0,0,0,.35)"></div>
<svg class="abs" style="left:9px;top:69px" width="31" height="31" viewBox="0 0 31 31" fill="none" stroke="#222" stroke-width="1.300"><path d="M8.300 8.300l5.800 5.800M22.700 8.300l-5.800 5.800M8.300 22.700l5.800-5.800M22.700 22.700l-5.800-5.800M8.300 12.200V8.300H12.200M18.800 8.300h3.900V12.200M8.300 18.800v3.900H12.200M18.800 22.700h3.900V18.800"/></svg>
<div class="abs" style="left:576.500px;top:9.500px;width:30px;height:30px;background:#fff;border-radius:4px;box-shadow:0 1px 4px rgba(0,0,0,.3)"></div>
<svg class="abs" style="left:576.500px;top:9.500px" width="30" height="30" viewBox="0 0 30 30"><g stroke="#fff" stroke-width=".8" stroke-linejoin="round"><path d="M15 13.500l-10.500 5.200 10.500 5.200 10.500-5.200z" fill="#b3b3b3"/><path d="M15 9.800l-10.500 5.200 10.500 5.200 10.500-5.200z" fill="#c6c6c6"/><path d="M15 6l-10.500 5.200 10.500 5.200 10.500-5.200z" fill="#dbdbdb"/></g></svg>
<div class="abs" style="left:0;top:267px;width:375.500px;height:16px;background:rgba(64,82,106,.8);border-radius:3px 3px 0 3px;color:#eef2f6;font-weight:bold;font-size:9.5px;line-height:14.5px;padding-left:5px;white-space:nowrap;letter-spacing:-0.38px">Para mover un pedido a otra ruta, haga clic en el icono de mover en la tarjeta del pedido.</div>

</div><!--/map-->
</div>
</body>
</html>
